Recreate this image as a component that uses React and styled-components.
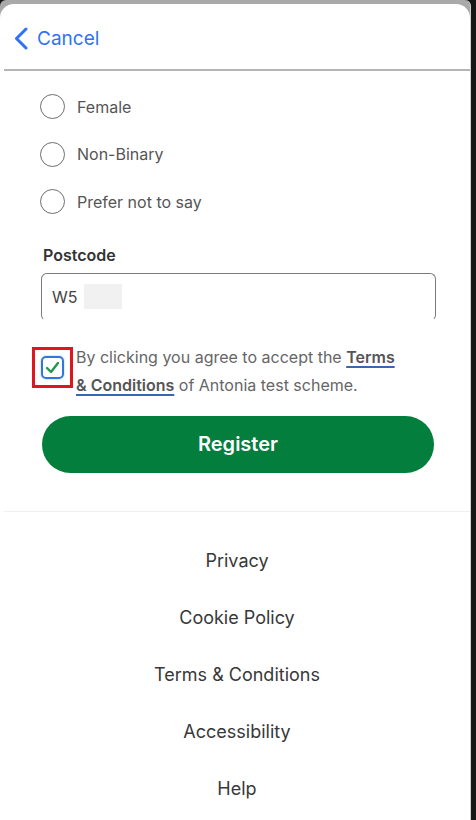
import React from 'react';
import styled, { createGlobalStyle } from 'styled-components';

const GlobalStyle = createGlobalStyle`
  html, body {
    margin: 0;
    padding: 0;
    background: #111;
  }
  * { box-sizing: border-box; }
`;

const Frame = styled.div`
  width: 476px;
  height: 820px;
  background: #161616;
  padding-right: 5px;
  overflow: hidden;
  font-family: Inter, "Liberation Sans", sans-serif;
`;

const Screen = styled.div`
  height: 100%;
  background: #a9a9a9;
  padding-top: 4px;
  border-top-left-radius: 6px;
  border-top-right-radius: 6px;
  border-right: 1px solid #cfcfcf;
`;

const Sheet = styled.div`
  height: 100%;
  background: #fff;
  border-radius: 14px 14px 0 0;
  display: flex;
  flex-direction: column;
`;

const Header = styled.div`
  height: 67px;
  flex-shrink: 0;
  display: flex;
  align-items: center;
  padding: 4px 0 0 9px;
  margin-left: 4px;
  border-bottom: 2px solid #b5b5b5;
`;

const BackLink = styled.a`
  display: flex;
  align-items: center;
  gap: 8px;
  color: #2f72f3;
  font-size: 19px;
  text-decoration: none;
`;

const Content = styled.div`
  padding: 12px 40px 0 40px;
  display: flex;
  flex-direction: column;
`;

const RadioRow = styled.label`
  height: 47.5px;
  display: flex;
  align-items: center;
  gap: 12px;
  font-size: 16px;
  color: #555;
`;

const RadioCircle = styled.span`
  width: 25px;
  height: 25px;
  border-radius: 50%;
  border: 1.5px solid #6f6f6f;
  flex-shrink: 0;
`;

const FieldLabel = styled.div`
  margin-top: 19px;
  padding-left: 3px;
  font-size: 16px;
  font-weight: 600;
  color: #333;
  height: 20px;
  line-height: 20px;
`;

const Input = styled.div`
  margin-top: 8px;
  margin-left: 1px;
  width: 395px;
  height: 48px;
  border: 1.5px solid #7a7a7a;
  border-bottom-color: transparent;
  border-radius: 6px;
  display: flex;
  align-items: center;
  padding-left: 10px;
  gap: 6px;
  font-size: 16px;
  color: #444;
`;

const Redacted = styled.span`
  width: 38px;
  height: 25px;
  background: #f1f1f1;
`;

const AgreeRow = styled.div`
  margin-top: 26px;
  margin-left: -8px;
  display: flex;
  align-items: flex-start;
  gap: 3px;
`;

const Highlight = styled.div`
  width: 41px;
  height: 41px;
  border: 3px solid #e0161b;
  display: flex;
  align-items: center;
  justify-content: center;
  flex-shrink: 0;
`;

const CheckBox = styled.span`
  width: 23px;
  height: 23px;
  border: 2px solid #3078d8;
  border-radius: 5px;
  display: flex;
  align-items: center;
  justify-content: center;
  box-shadow: 0 0 2px rgba(46, 116, 214, 0.5);
`;

const AgreeText = styled.p`
  margin: -4px 0 0 0;
  font-size: 16px;
  line-height: 28px;
  color: #666;
`;

const TermsLink = styled.a`
  color: #555;
  font-weight: 600;
  text-decoration: underline;
  text-decoration-color: #3a66b0;
  text-decoration-thickness: 1.5px;
  text-underline-offset: 3px;
`;

const RegisterButton = styled.button`
  margin-top: 17px;
  margin-left: 2px;
  width: 392px;
  height: 57px;
  border: none;
  border-radius: 29px;
  background: #037e3c;
  color: #fff;
  font-family: inherit;
  font-size: 20px;
  font-weight: 600;
`;

const Footer = styled.div`
  margin-top: 38px;
  margin-left: 4px;
  border-top: 1px solid #f0f0f0;
  padding-top: 20px;
  display: flex;
  flex-direction: column;
  align-items: center;
`;

const FooterLink = styled.a`
  height: 57px;
  display: flex;
  align-items: center;
  font-size: 18px;
  color: #383838;
  text-decoration: none;
`;

const radios = ['Female', 'Non-Binary', 'Prefer not to say'];
const links = ['Privacy', 'Cookie Policy', 'Terms & Conditions', 'Accessibility', 'Help'];

export default function App() {
  return (
    <Frame>
      <GlobalStyle />
      <Screen>
        <Sheet>
          <Header>
            <BackLink>
              <svg width="16" height="23" viewBox="0 0 16 23" fill="none">
                <path d="M13 2L3.5 11.5L13 21" stroke="#2f72f3" strokeWidth="3" strokeLinecap="round" strokeLinejoin="round" />
              </svg>
              Cancel
            </BackLink>
          </Header>
          <Content>
            {radios.map((r) => (
              <RadioRow key={r}>
                <RadioCircle />
                {r}
              </RadioRow>
            ))}
            <FieldLabel>Postcode</FieldLabel>
            <Input>
              W5
              <Redacted />
            </Input>
            <AgreeRow>
              <Highlight>
                <CheckBox>
                  <svg width="15" height="13" viewBox="0 0 15 13" fill="none">
                    <path d="M2 7L6 11L13 2" stroke="#1f9a4c" strokeWidth="2.4" strokeLinecap="round" strokeLinejoin="round" />
                  </svg>
                </CheckBox>
              </Highlight>
              <AgreeText>
                By clicking you agree to accept the <TermsLink>Terms</TermsLink>
                <br />
                <TermsLink>&amp; Conditions</TermsLink> of Antonia test scheme.
              </AgreeText>
            </AgreeRow>
            <RegisterButton>Register</RegisterButton>
          </Content>
          <Footer>
            {links.map((l) => (
              <FooterLink key={l}>{l}</FooterLink>
            ))}
          </Footer>
        </Sheet>
      </Screen>
    </Frame>
  );
}
